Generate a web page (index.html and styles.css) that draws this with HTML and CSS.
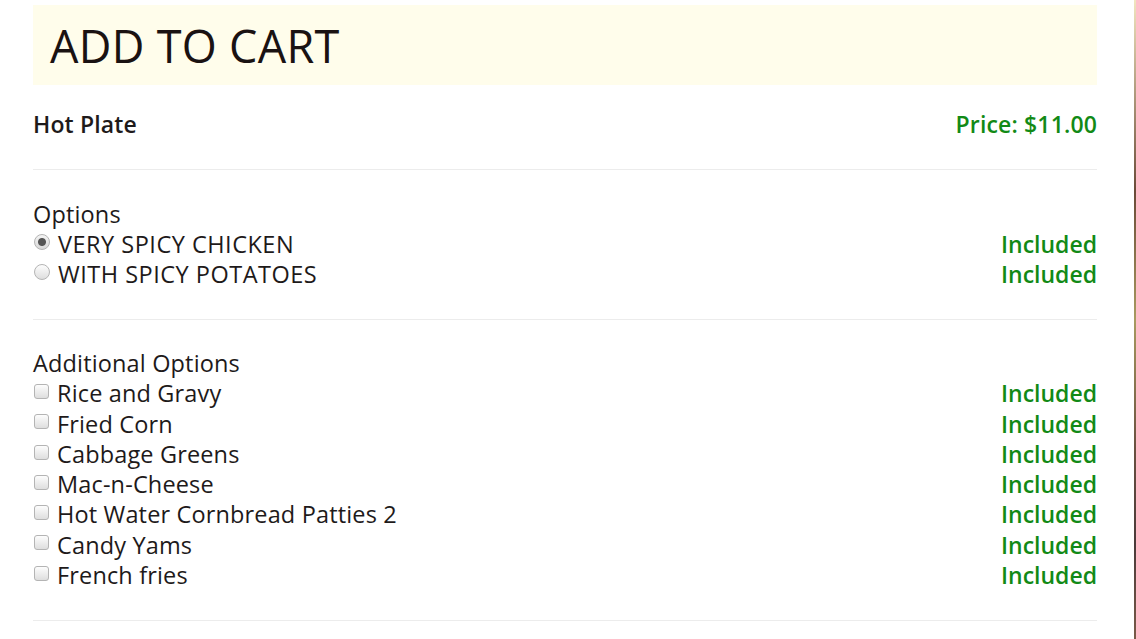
FILE: index.html
```html
<!DOCTYPE html>
<html lang="en">
<head>
    <meta charset="UTF-8">
    <meta name="viewport" content="width=device-width, initial-scale=1.0">
    <title>Add to Cart</title>
    <link rel="stylesheet" href="styles.css">
</head>
<body>
    <div class="modal">
        <div class="modal-header">
            <h1>ADD TO CART</h1>
        </div>

        <div class="section item-row">
            <span class="item-name">Hot Plate</span>
            <span class="price">Price: $11.00</span>
        </div>

        <div class="section">
            <div class="group-title">Options</div>
            <label class="option">
                <span class="option-label caps"><input type="radio" name="option" checked> VERY SPICY CHICKEN</span>
                <span class="included">Included</span>
            </label>
            <label class="option">
                <span class="option-label caps"><input type="radio" name="option"> WITH SPICY POTATOES</span>
                <span class="included">Included</span>
            </label>
        </div>

        <div class="section extras">
            <div class="group-title">Additional Options</div>
            <label class="option">
                <span class="option-label"><input type="checkbox"> Rice and Gravy</span>
                <span class="included">Included</span>
            </label>
            <label class="option">
                <span class="option-label"><input type="checkbox"> Fried Corn</span>
                <span class="included">Included</span>
            </label>
            <label class="option">
                <span class="option-label"><input type="checkbox"> Cabbage Greens</span>
                <span class="included">Included</span>
            </label>
            <label class="option">
                <span class="option-label"><input type="checkbox"> Mac-n-Cheese</span>
                <span class="included">Included</span>
            </label>
            <label class="option">
                <span class="option-label"><input type="checkbox"> Hot Water Cornbread Patties 2</span>
                <span class="included">Included</span>
            </label>
            <label class="option">
                <span class="option-label"><input type="checkbox"> Candy Yams</span>
                <span class="included">Included</span>
            </label>
            <label class="option">
                <span class="option-label"><input type="checkbox"> French fries</span>
                <span class="included">Included</span>
            </label>
        </div>
    </div>
</body>
</html>
```

FILE: styles.css
```css
body {
    font-family: 'Open Sans', 'Noto Sans', sans-serif;
    margin: 0;
    color: #1e1a1a;
    background-color: #fff;
}
.modal {
    height: 639px;
    box-sizing: border-box;
    padding: 5px 37px 0 33px;
    border-right: 2px solid #8a6a52;
    border-image: linear-gradient(#f2e6c0, #6a4a38 30%, #a89a60 50%, #6a5040 70%, #4a3a3a 85%, #7a5a48) 1;
    overflow: hidden;
}
.modal-header {
    background: #fffdeb;
    height: 80px;
    padding-left: 17px;
    display: flex;
    align-items: center;
}
.modal-header h1 {
    margin: 0;
    font-size: 45px;
    font-weight: 400;
    letter-spacing: 0.3px;
    color: #1a1212;
}
.section {
    padding: 29px 0 30px;
    border-bottom: 1px solid #ececec;
    font-size: 23.5px;
    line-height: 30px;
    letter-spacing: 0.15px;
}
.item-row {
    display: flex;
    justify-content: space-between;
    padding: 24px 0 30px;
}
.item-name {
    font-weight: 600;
    font-size: 23px;
}
.price {
    font-weight: 600;
    font-size: 23px;
    color: #128a16;
}
.extras {
    padding-top: 28px;
    line-height: 30.3px;
}
.group-title {
    font-weight: 400;
}
.option {
    display: flex;
    justify-content: space-between;
}
.option-label {
    display: flex;
    align-items: center;
}
.caps {
    letter-spacing: 0.5px;
}
.included {
    color: #128a16;
    font-weight: 600;
    font-size: 23px;
    letter-spacing: 0;
}
input[type="radio"],
input[type="checkbox"] {
    appearance: none;
    -webkit-appearance: none;
    margin: -4px 8px 0 1px;
    width: 16px;
    height: 16px;
    box-sizing: border-box;
    border: 1px solid #b4b4b4;
    background: linear-gradient(#fdfdfd, #dedede);
}
input[type="radio"] {
    border-radius: 50%;
}
input[type="radio"]:checked {
    background: radial-gradient(circle, #555 0, #555 3.5px, transparent 4.5px), linear-gradient(#f4f4f4, #d8d8d8);
}
input[type="checkbox"] {
    width: 15px;
    height: 15px;
    border-radius: 3px;
    margin-top: -4px;
}
```
